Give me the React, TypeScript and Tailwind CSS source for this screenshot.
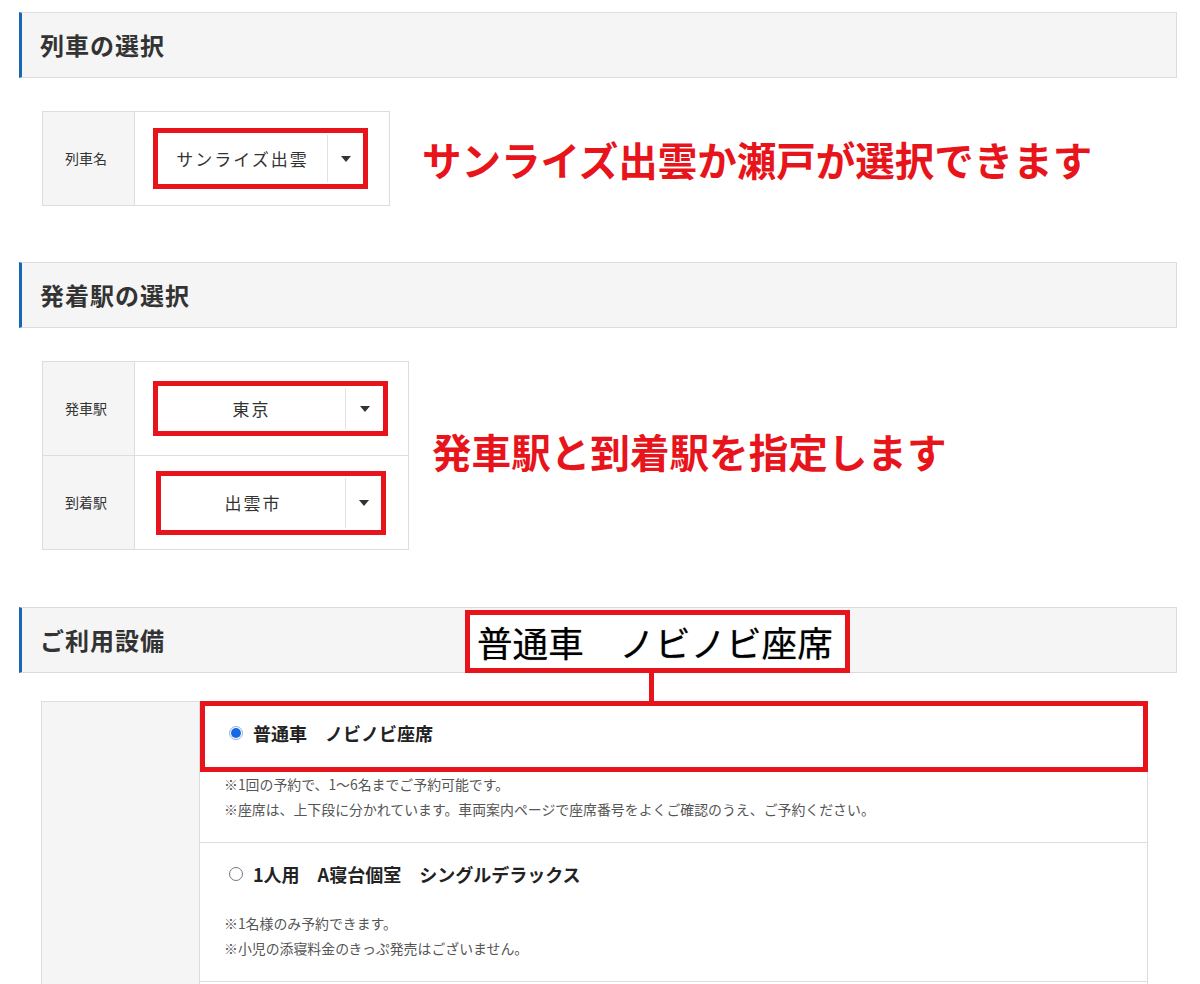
import React from 'react';

const RED = 'border-[#e8141b]';

const SectionHeader: React.FC<{ title: string; children?: React.ReactNode }> = ({ title, children }) => (
  <div className="relative ml-[19px] w-[1158px] h-[66px] bg-[#f5f5f5] border-y border-r border-[#dcdcdc] border-l-[3px] border-l-[#1866b4] flex items-center pl-[18px]">
    <h2 className="text-[24px] font-bold text-[#333] tracking-[1px] leading-none">{title}</h2>
    {children}
  </div>
);

interface SelectBoxProps {
  value: string;
  width: string;
  height: string;
  arrowWidth: string;
}

const SelectBox: React.FC<SelectBoxProps> = ({ value, width, height, arrowWidth }) => (
  <div className={`${width} ${height} border-[5px] ${RED} bg-white flex`}>
    <div className="flex-1 flex items-center justify-center text-[17px] tracking-[2px] text-[#333]">{value}</div>
    <div className="w-px bg-[#e2e2e2] my-[2px]" />
    <div className={`${arrowWidth} flex items-center justify-center`}>
      <span className="w-0 h-0 border-x-[5px] border-x-transparent border-t-[6px] border-t-[#333]" />
    </div>
  </div>
);

const Label: React.FC<{ text: string }> = ({ text }) => (
  <div className="w-[92px] shrink-0 bg-[#f5f5f5] border-r border-[#ddd] flex items-center pl-[22px] text-[14px] text-[#333]">
    {text}
  </div>
);

const Note: React.FC<{ children: React.ReactNode }> = ({ children }) => (
  <p className="text-[13.9px] leading-[25px] text-[#555] whitespace-nowrap">{children}</p>
);

const Radio: React.FC<{ checked?: boolean }> = ({ checked }) =>
  checked ? (
    <span className="w-[14px] h-[14px] rounded-full border border-[#8fb0dc] bg-white flex items-center justify-center shrink-0">
      <span className="w-[10px] h-[10px] rounded-full bg-[#1668e3]" />
    </span>
  ) : (
    <span className="w-[14px] h-[14px] rounded-full border border-[#777] bg-white shrink-0" />
  );

export default function App() {
  return (
    <div className="w-[1200px] min-h-[984px] bg-white pt-[12px] overflow-hidden font-['Noto_Sans_CJK_JP','Noto_Sans',sans-serif]">
      {/* 列車の選択 */}
      <SectionHeader title="列車の選択" />
      <div className="mt-[33px] ml-[42px] flex items-center">
        <div className="w-[348px] h-[95px] border border-[#ddd] flex">
          <Label text="列車名" />
          <div className="flex-1 flex items-center pl-[18px]">
            <SelectBox value="サンライズ出雲" width="w-[215px]" height="h-[61px]" arrowWidth="w-[35px]" />
          </div>
        </div>
        <p className="ml-[32px] text-[39.5px] font-bold leading-none text-[#e8141b] whitespace-nowrap">
          サンライズ出雲か瀬戸が選択できます
        </p>
      </div>

      {/* 発着駅の選択 */}
      <div className="mt-[56px]">
        <SectionHeader title="発着駅の選択" />
      </div>
      <div className="mt-[33px] ml-[42px] flex items-center">
        <div className="w-[367px] border border-[#ddd] flex flex-col">
          <div className="h-[94px] flex border-b border-[#ddd]">
            <Label text="発車駅" />
            <div className="flex-1 flex items-center pl-[18px]">
              <SelectBox value="東京" width="w-[235px]" height="h-[55px]" arrowWidth="w-[37px]" />
            </div>
          </div>
          <div className="h-[93px] flex">
            <Label text="到着駅" />
            <div className="flex-1 flex items-center pl-[21px]">
              <SelectBox value="出雲市" width="w-[230px]" height="h-[64px]" arrowWidth="w-[35px]" />
            </div>
          </div>
        </div>
        <p className="ml-[23px] mb-[10px] text-[39.6px] font-bold leading-none text-[#e8141b] whitespace-nowrap">
          発車駅と到着駅を指定します
        </p>
      </div>

      {/* ご利用設備 */}
      <div className="mt-[57px]">
        <SectionHeader title="ご利用設備">
          <div className={`absolute left-[443px] top-[2px] w-[385px] h-[63px] border-[5px] ${RED} bg-white flex items-center pl-[7px] z-10`}>
            <span className="text-[35.6px] leading-none text-black whitespace-nowrap [text-shadow:0_0_1px_rgba(0,0,0,0.5)]">
              普通車　ノビノビ座席
            </span>
          </div>
          <div className="absolute left-[627px] top-[64px] w-[5px] h-[31px] bg-[#e8141b] z-10" />
        </SectionHeader>
      </div>

      <div className="mt-[28px] ml-[41px] w-[1107px] border border-[#ddd] flex">
        <div className="w-[158px] shrink-0 bg-[#f5f5f5] border-r border-[#ddd]" />
        <div className="flex-1 flex flex-col">
          <div className="border-b border-[#ddd] pb-[20px]">
            <div className={`relative -mt-px -mr-px h-[71px] border-[5px] ${RED} pl-[24px] pt-[14px]`}>
              <div className="flex items-center gap-[10px] h-[26px]">
                <Radio checked />
                <span className="text-[18px] font-bold text-[#222] leading-[26px]">普通車　ノビノビ座席</span>
              </div>
            </div>
            <div className="pl-[24px]">
              <Note>※1回の予約で、1～6名までご予約可能です。</Note>
              <Note>※座席は、上下段に分かれています。車両案内ページで座席番号をよくご確認のうえ、ご予約ください。</Note>
            </div>
          </div>

          <div className="border-b border-[#ddd] pt-[18px] pb-[20px] pl-[29px]">
            <div className="flex items-center gap-[10px] h-[26px]">
              <Radio />
              <span className="text-[18px] font-bold text-[#222] leading-[26px]">1人用　A寝台個室　シングルデラックス</span>
            </div>
            <div className="mt-[24px] -ml-[5px]">
              <Note>※1名様のみ予約できます。</Note>
              <Note>※小児の添寝料金のきっぷ発売はございません。</Note>
            </div>
          </div>

          <div className="h-[80px]" />
        </div>
      </div>
    </div>
  );
}
